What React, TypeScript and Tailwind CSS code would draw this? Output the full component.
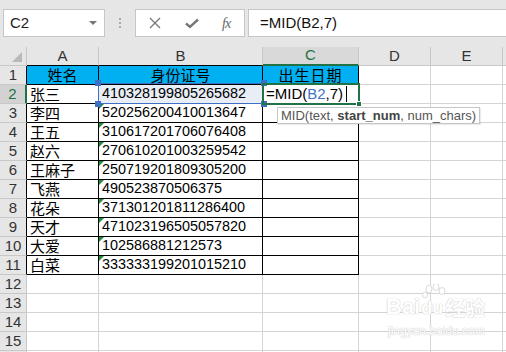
import React from 'react';

const rows = [
  { name: '张三', id: '410328199805265682' },
  { name: '李四', id: '520256200410013647' },
  { name: '王五', id: '310617201706076408' },
  { name: '赵六', id: '270610201003259542' },
  { name: '王麻子', id: '250719201809305200' },
  { name: '飞燕', id: '490523870506375' },
  { name: '花朵', id: '371301201811286400' },
  { name: '天才', id: '471023196505057820' },
  { name: '大爱', id: '102586881212573' },
  { name: '白菜', id: '333333199201015210' },
];

const cjk = "font-['Noto_Sans_CJK_SC',sans-serif]";
const num = "font-['Liberation_Sans',Arial,sans-serif]";

const GreenTick = () => (
  <span className="absolute left-0 top-0 w-0 h-0 border-t-[5px] border-r-[5px] border-t-[#1e8c3c] border-r-transparent" />
);

const Handle = ({ className }: { className: string }) => (
  <span className={`absolute w-[6px] h-[6px] bg-[#3d6fc4] ${className}`} />
);

const App: React.FC = () => {
  const blank = Array.from({ length: 5 }, (_, i) => i + 12);

  return (
    <div className={`w-[506px] h-[352px] overflow-hidden bg-white relative ${num}`}>
      {/* formula bar */}
      <div className="h-[47px] bg-[#e6e6e6] flex items-start pt-[9px]">
        <div className="ml-[3px] w-[102px] h-[28px] bg-white border border-[#c6c6c6] flex items-center justify-between pl-[6px] pr-[7px] text-[15px] text-[#222]">
          <span>C2</span>
          <span className="w-0 h-0 border-l-[4px] border-r-[4px] border-t-[4px] border-l-transparent border-r-transparent border-t-[#777]" />
        </div>
        <div className="w-[30px] h-[28px] flex flex-col items-center justify-center gap-[2px]">
          <span className="w-[2px] h-[2px] bg-[#aaa]" />
          <span className="w-[2px] h-[2px] bg-[#aaa]" />
          <span className="w-[2px] h-[2px] bg-[#aaa]" />
        </div>
        <div className="w-[110px] h-[28px] bg-white border border-[#c6c6c6] flex items-center">
          <svg width="12" height="12" viewBox="0 0 12 12" className="ml-[13px]">
            <path d="M1 1 L11 11 M11 1 L1 11" stroke="#777" strokeWidth="1.3" fill="none" />
          </svg>
          <svg width="14" height="11" viewBox="0 0 14 11" className="ml-[24px]">
            <path d="M1 5.5 L5 9 L13 1.5" stroke="#777" strokeWidth="2.4" fill="none" />
          </svg>
          <span className="ml-[23px] font-['Liberation_Serif',serif] italic text-[14px] text-[#666] tracking-[-1px]">fx</span>
        </div>
        <div className="ml-[3px] flex-1 h-[28px] bg-white border-y border-l border-[#c6c6c6] flex items-center pl-[11px] text-[15px] text-[#111]">
          =MID(B2,7)
        </div>
      </div>

      {/* column headers */}
      <div className="flex h-[19px] bg-[#e6e6e6] text-[15px] text-[#333]">
        <div className="w-[27px] border-r border-b border-[#c8c8c8] relative">
          <span className="absolute left-[12px] top-[5px] w-0 h-0 border-b-[10px] border-l-[10px] border-b-[#b9b9b9] border-l-transparent" />
        </div>
        <div className="w-[72px] border-r border-b border-r-[#c8c8c8] border-b-black flex items-center justify-center">A</div>
        <div className="w-[164px] border-r border-b border-r-[#c8c8c8] border-b-black flex items-center justify-center">B</div>
        <div className="w-[96px] bg-[#d9d9d9] border-r border-b-2 border-r-[#c8c8c8] border-b-[#217346] flex items-center justify-center text-[#217346]">C</div>
        <div className="w-[72px] border-r border-b border-[#c8c8c8] flex items-center justify-center">D</div>
        <div className="w-[72px] border-r border-b border-[#c8c8c8] flex items-center justify-center">E</div>
        <div className="flex-1 border-b border-[#c8c8c8]" />
      </div>

      {/* row 1: table header */}
      <div className="flex h-[19px]">
        <div className="w-[27px] bg-[#e6e6e6] border-r border-b border-r-black border-b-[#c8c8c8] flex items-center justify-center text-[15px] text-[#333]">1</div>
        <div className={`w-[72px] bg-[#00b0f0] border-r border-b border-black flex items-center justify-center text-[15px] text-black ${cjk}`}>姓名</div>
        <div className={`w-[164px] bg-[#00b0f0] border-r border-b border-black flex items-center justify-center text-[15px] text-black ${cjk}`}>身份证号</div>
        <div className={`w-[96px] bg-[#00b0f0] border-r border-b border-black flex items-center justify-center text-[15px] text-black tracking-[1px] ${cjk}`}>出生日期</div>
        <div className="w-[72px] border-r border-b border-[#d4d4d4]" />
        <div className="w-[72px] border-r border-b border-[#d4d4d4]" />
        <div className="flex-1 border-b border-[#d4d4d4]" />
      </div>

      {/* data rows */}
      {rows.map((r, i) => {
        const n = i + 2;
        const sel = n === 2;
        return (
          <div key={n} className="flex h-[19px]">
            <div
              className={`w-[27px] border-r border-b flex items-center justify-center text-[15px] ${
                sel
                  ? 'bg-[#d2d2d2] border-r-[#217346] border-r-2 border-b-[#c8c8c8] text-[#217346]'
                  : 'bg-[#e6e6e6] border-r-black border-b-[#c8c8c8] text-[#333]'
              }`}
            >
              {n}
            </div>
            <div className={`w-[72px] border-r border-b border-black flex items-center pl-[3px] text-[15px] text-black ${cjk}`}>{r.name}</div>
            <div
              className={`w-[164px] border-r border-b border-black flex items-center pl-[3px] text-[14.4px] text-black relative ${
                sel ? 'bg-[#e8edf6]' : ''
              }`}
            >
              {!sel && <GreenTick />}
              {r.id}
            </div>
            <div className="w-[96px] border-r border-b border-black flex items-center pl-[3px] text-[15px] text-black">
              {sel && (
                <span>
                  =MID(<span className="text-[#4472c4]">B2</span>,7)
                </span>
              )}
            </div>
            <div className="w-[72px] border-r border-b border-[#d4d4d4]" />
            <div className="w-[72px] border-r border-b border-[#d4d4d4]" />
            <div className="flex-1 border-b border-[#d4d4d4]" />
          </div>
        );
      })}

      {blank.map((n) => (
        <div key={n} className="flex h-[19px]">
          <div className="w-[27px] bg-[#e6e6e6] border-r border-b border-[#c8c8c8] flex items-center justify-center text-[15px] text-[#333]">{n < 16 ? n : ''}</div>
          <div className="w-[72px] border-r border-b border-[#d4d4d4]" />
          <div className="w-[164px] border-r border-b border-[#d4d4d4]" />
          <div className="w-[96px] border-r border-b border-[#d4d4d4]" />
          <div className="w-[72px] border-r border-b border-[#d4d4d4]" />
          <div className="w-[72px] border-r border-b border-[#d4d4d4]" />
          <div className="flex-1 border-b border-[#d4d4d4]" />
        </div>
      ))}

      {/* B2 reference highlight */}
      <div className="absolute left-[98px] top-[83px] w-[166px] h-[21px] border-[1.5px] border-[#3d6fc4] pointer-events-none">
        <Handle className="-left-[4px] -top-[4px]" />
        <Handle className="-right-[4px] -top-[4px]" />
        <Handle className="-left-[4px] -bottom-[4px]" />
        <Handle className="-right-[4px] -bottom-[4px]" />
      </div>

      {/* C2 active cell */}
      <div className="absolute left-[262px] top-[83px] w-[98px] h-[22px] border-2 border-[#217346] pointer-events-none">
        <span className="absolute -right-[4px] -bottom-[4px] w-[6px] h-[6px] bg-[#217346] border border-white" />
        <span className="absolute left-[82px] top-[1px] w-px h-[16px] bg-black" />
      </div>

      {/* function tooltip */}
      <div className="absolute left-[277px] top-[107px] h-[17px] px-[3px] bg-white border border-[#c6c6c6] shadow-[1px_1px_1px_rgba(0,0,0,0.08)] flex items-center text-[13px] text-[#555] whitespace-pre">
        MID(text, <b className="font-bold text-[#444]">start_num</b>, num_chars)
      </div>

      {/* watermark */}
      <div className="absolute left-[386px] top-[296px] pointer-events-none select-none">
        <div className="flex items-end text-[22px] font-bold text-white [text-shadow:0_0_1px_#c8c8c8,0_0_1px_#c8c8c8] leading-none">
          <span>Bai</span>
          <span className="relative ml-[1px]">
            <svg width="28" height="26" viewBox="0 0 28 26" className="absolute -top-[12px] left-0">
              <g fill="white" stroke="#d0d0d0" strokeWidth="0.8">
                <ellipse cx="8" cy="5" rx="3" ry="4" />
                <ellipse cx="15" cy="3" rx="3" ry="3.5" />
                <ellipse cx="21" cy="7" rx="3" ry="3.5" />
                <ellipse cx="4" cy="11" rx="2.5" ry="3" />
              </g>
            </svg>
            <span className="relative text-[18px]">du</span>
          </span>
          <span className={`ml-[2px] text-[20px] ${cjk}`}>经验</span>
        </div>
        <div className="mt-[4px] text-[12px] text-white [text-shadow:0_0_1px_#c8c8c8,0_0_1px_#c8c8c8] ml-[2px]">jingyan.baidu.com</div>
      </div>
    </div>
  );
};

export default App;
